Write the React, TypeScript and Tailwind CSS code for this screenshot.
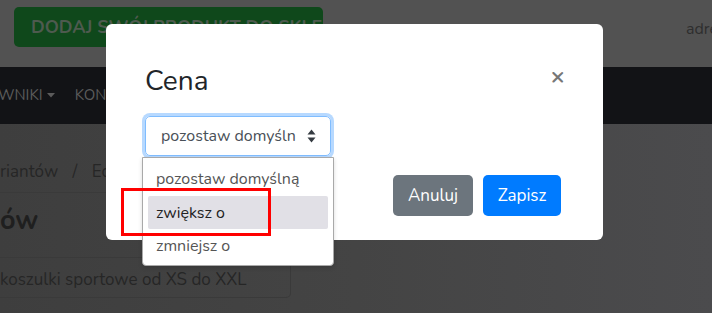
import React from 'react';

const font = { fontFamily: 'Nunito, Lato, "Noto Sans", sans-serif' };

const SortArrows: React.FC = () => (
  <svg width="9" height="14" viewBox="0 0 9 14" className="fill-[#343a40]">
    <path d="M4.5 0.5 L8.5 5.5 L0.5 5.5 Z" />
    <path d="M4.5 13.5 L8.5 8.5 L0.5 8.5 Z" />
  </svg>
);

const Caret: React.FC = () => (
  <svg width="8" height="5" viewBox="0 0 8 5" className="fill-[#5b5b5b]">
    <path d="M0 0 L8 0 L4 4.5 Z" />
  </svg>
);

const Background: React.FC = () => (
  <div className="flex flex-col h-full">
    <div className="h-[67px] bg-[#525252] flex items-start justify-between pl-[14px] pt-[7px]">
      <div className="w-[309px] h-[40px] rounded-[5px] bg-[#0f481b] flex items-center pl-[17px] text-[18px] font-bold text-[#4e5a4f] whitespace-nowrap overflow-hidden">
        DODAJ SWÓJ PRODUKT DO SKLEPU
      </div>
      <div className="text-[16px] text-[#2e2e2e] pt-[10px] -mr-[6px] whitespace-nowrap">adre</div>
    </div>
    <div className="h-[57px] bg-[#121316] flex items-center text-[15px] text-[#5b5b5b] -ml-[2px]">
      <span className="flex items-center gap-[4px]">WNIKI <Caret /></span>
      <span className="ml-[20px]">KON</span>
    </div>
    <div className="flex-1 bg-gradient-to-r from-[#3e3e3e] via-[#444444] to-[#4b4b4d]">
      <div className="pt-[38px] pr-[420px]">
        <div className="text-[17px] text-[#262626] leading-[20px] whitespace-nowrap">
          riantów <span className="mx-[10px]">/</span> Ec
        </div>
        <div className="mt-[10px] h-px bg-[#3a3a3a]" />
      </div>
      <div className="text-[27px] font-bold text-[#1f1f1f] leading-[32px] mt-[12px]">ów</div>
      <div className="mt-[20px] w-[291px] h-[41px] pt-[4px] border border-[#3a3a3a] border-l-0 rounded-r-[5px] flex items-center text-[17px] text-[#262626] whitespace-nowrap">
        koszulki sportowe od XS do XXL
      </div>
    </div>
  </div>
);

const Modal: React.FC = () => (
  <div className="absolute left-[106px] top-[24px] w-[497px] h-[216px] bg-white rounded-[6px] px-[39px] pt-[40px]">
    <div className="flex items-start justify-between h-[36px]">
      <div className="text-[28px] leading-[34px] text-[#212529]">Cena</div>
      <div className="text-[24px] leading-[20px] mt-[2px] -mr-[1px] text-[#777] font-bold">×</div>
    </div>
    <div className="mt-[16px] w-[186px] h-[40px] rounded-[5px] border border-[#80bdff] shadow-[0_0_0_3px_#b7d9ff] flex items-center justify-between pl-[15px] pr-[14px] text-[16px] text-[#495057]">
      <span>pozostaw domyśln</span>
      <SortArrows />
    </div>
    <div className="mt-[19px] flex justify-end gap-[10px] mr-[3px]">
      <button className="w-[80px] h-[41px] rounded-[5px] bg-[#6c757d] text-white text-[17px]">Anuluj</button>
      <button className="w-[78px] h-[41px] rounded-[5px] bg-[#007bff] text-white text-[17px]">Zapisz</button>
    </div>
    <div className="absolute left-[36px] top-[133px] w-[192px] h-[109px] bg-white border border-[#a9a9a9] rounded-b-[4px] shadow-[0_2px_4px_rgba(0,0,0,0.15)] px-[5px] pt-[4px] text-[16px]">
      <div className="h-[34px] flex items-center pl-[8px] text-[#555]">pozostaw domyślną</div>
      <div className="h-[33px] flex items-center pl-[8px] bg-[#e1e0e6] rounded-[2px] text-[#222]">zwiększ o</div>
      <div className="h-[33px] flex items-center pl-[8px] text-[#555]">zmniejsz o</div>
    </div>
    <div className="absolute left-[15px] top-[164px] w-[150px] h-[48px] border-[3px] border-[#ff0000]" />
  </div>
);

export default function App() {
  return (
    <div className="relative w-[712px] h-[313px] overflow-hidden" style={font}>
      <Background />
      <Modal />
    </div>
  );
}
